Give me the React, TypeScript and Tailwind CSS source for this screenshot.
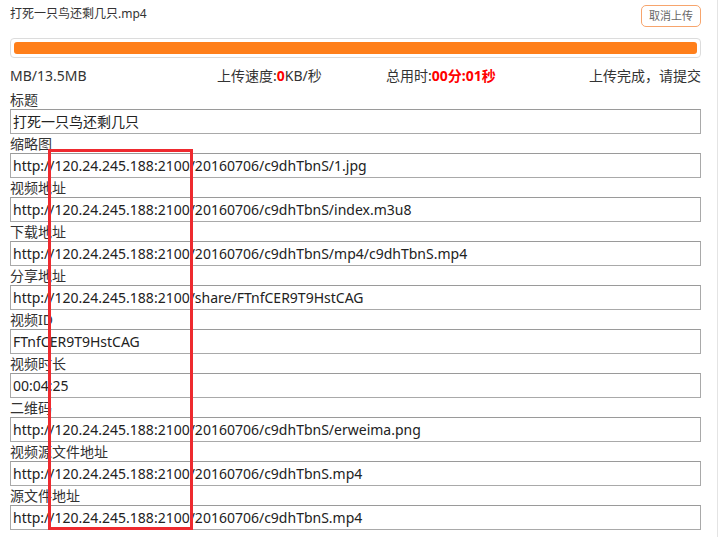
import React from "react";

const fields = [
  { label: "标题", value: "打死一只鸟还剩几只" },
  { label: "缩略图", value: "http://120.24.245.188:2100/20160706/c9dhTbnS/1.jpg" },
  { label: "视频地址", value: "http://120.24.245.188:2100/20160706/c9dhTbnS/index.m3u8" },
  { label: "下载地址", value: "http://120.24.245.188:2100/20160706/c9dhTbnS/mp4/c9dhTbnS.mp4" },
  { label: "分享地址", value: "http://120.24.245.188:2100/share/FTnfCER9T9HstCAG" },
  { label: "视频ID", value: "FTnfCER9T9HstCAG" },
  { label: "视频时长", value: "00:04:25" },
  { label: "二维码", value: "http://120.24.245.188:2100/20160706/c9dhTbnS/erweima.png" },
  { label: "视频源文件地址", value: "http://120.24.245.188:2100/20160706/c9dhTbnS.mp4" },
  { label: "源文件地址", value: "http://120.24.245.188:2100/20160706/c9dhTbnS.mp4" },
];

export default function App() {
  return (
    <div
      className="relative w-[720px] h-[537px] bg-white overflow-hidden text-[#333]"
      style={{ fontFamily: '"Noto Sans", "Noto Sans CJK SC", sans-serif' }}
    >
      <div className="w-[718px] h-full border-r border-[#e4e4e4] pl-[10px] pr-[16px]">
        {/* Header */}
        <div className="flex items-center justify-between h-[30px] pt-[1px]">
          <span className="text-[12px] -mt-[3px]">打死一只鸟还剩几只.mp4</span>
          <button className="h-[22px] px-[7px] text-[11px] text-[#666] border border-[#f7a56d] rounded-[5px] bg-white leading-none">
            取消上传
          </button>
        </div>

        {/* Progress */}
        <div className="mt-[8px] h-[20px] border border-[#dcdcdc] rounded-[4px] p-[3px]">
          <div className="h-full w-full bg-[#ff7f1a] rounded-[3px]" />
        </div>

        {/* Stats */}
        <div className="relative h-[34px] text-[14px] flex items-center">
          <span>MB/13.5MB</span>
          <span className="absolute left-[207px]">
            上传速度:<span className="text-[#ff0000] font-bold">0</span>KB/秒
          </span>
          <span className="absolute left-[376px]">
            总用时:<span className="text-[#ff0000] font-bold">00分:01秒</span>
          </span>
          <span className="ml-auto">上传完成，请提交</span>
        </div>

        {/* Fields */}
        <div className="flex flex-col">
          {fields.map((f) => (
            <div key={f.label} className="h-[44px] flex flex-col">
              <div className="h-[19px] text-[14px] leading-[19px] -mt-[2px]">{f.label}</div>
              <div className="h-[25px] border border-[#a9a9a9] border-t-[#9a9a9a] px-[2px] flex items-center text-[14px] text-[#222] whitespace-nowrap overflow-hidden">
                {f.value}
              </div>
            </div>
          ))}
        </div>
      </div>

      {/* Red highlight box */}
      <div className="absolute left-[48px] top-[149px] w-[145px] h-[381px] border-[3px] border-[#ee2a2f] pointer-events-none" />
    </div>
  );
}
